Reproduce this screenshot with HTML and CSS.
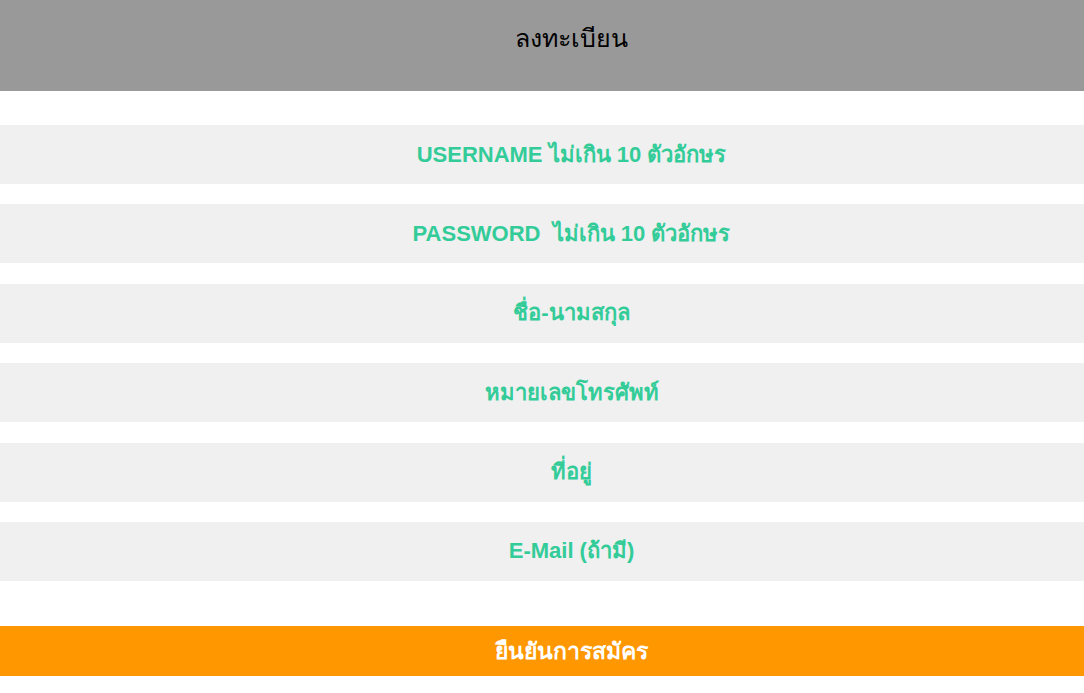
FILE: index.html
```html
<!doctype html>
<html>
<head>
<meta charset="utf-8">
<title>ลงทะเบียน</title>
<link rel="stylesheet" href="styles.css">
</head>

<body>
	<div class="head">
		<h2 class="title">ลงทะเบียน</h2>
	</div>

	<form class="reg-form" action="javascript:;">
		<input class="field" type="text" placeholder="USERNAME ไม่เกิน 10 ตัวอักษร">
		<input class="field" type="password" placeholder="PASSWORD  ไม่เกิน 10 ตัวอักษร">
		<input class="field" type="text" placeholder="ชื่อ-นามสกุล">
		<input class="field" type="text" placeholder="หมายเลขโทรศัพท์">
		<input class="field" type="text" placeholder="ที่อยู่">
		<input class="field" type="text" placeholder="E-Mail (ถ้ามี)">
		<button class="submit" type="submit">ยืนยันการสมัคร</button>
	</form>
</body>
</html>
```

FILE: styles.css
```css
* { margin:0; padding:0; box-sizing:border-box; }
body { background:#fff; font-family:"Liberation Sans", Arial, sans-serif; }
.head { height:91px; background:#999; padding:20px 0 0 58px; text-align:center; }
.title { font-family:"Noto Sans", "Liberation Sans", sans-serif; font-size:25px; font-weight:500; line-height:34px; color:#000; }
.reg-form { display:flex; flex-direction:column; gap:20.4px; padding-top:34px; }
.field { display:block; width:100%; height:59px; padding-left:59px; border:none; outline:none; background:#f0f0f0; text-align:center; font-family:"Liberation Sans", Arial, sans-serif; font-size:22px; font-weight:bold; color:#33cc99; }
.field::placeholder { color:#33cc99; opacity:1; white-space:pre; }
.submit { display:block; width:100%; height:50px; margin-top:24.6px; padding-left:59px; border:none; background:#ff9800; color:#fff; font-family:"Liberation Sans", Arial, sans-serif; font-size:23px; font-weight:bold; cursor:pointer; }
```
